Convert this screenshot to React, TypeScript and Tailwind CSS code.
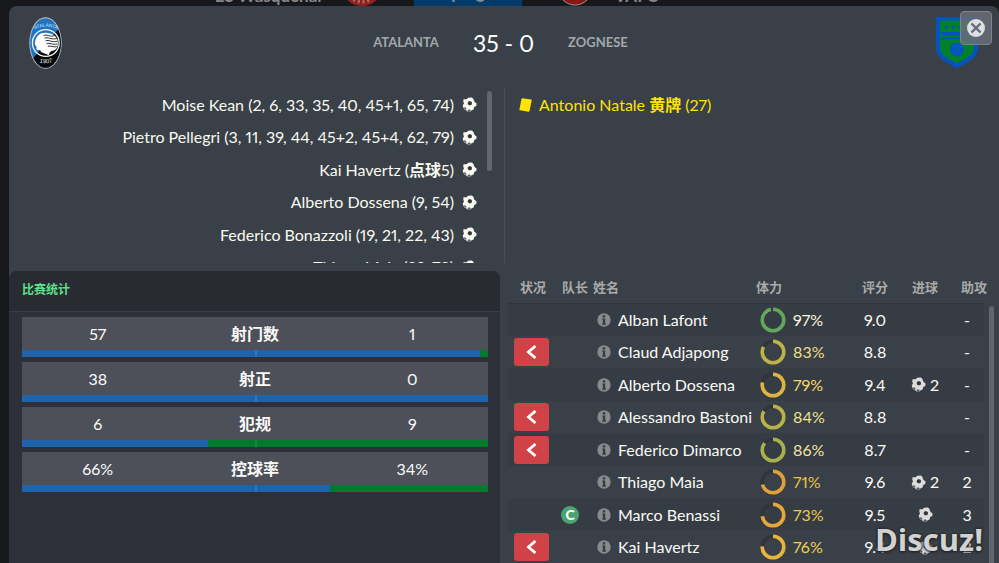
import clsx from "clsx";

const scorers = [
  { name: "Moise Kean", minutes: "2, 6, 33, 35, 40, 45+1, 65, 74" },
  { name: "Pietro Pellegri", minutes: "3, 11, 39, 44, 45+2, 45+4, 62, 79" },
  { name: "Kai Havertz", note: "点球", minutes: "5" },
  { name: "Alberto Dossena", minutes: "9, 54" },
  { name: "Federico Bonazzoli", minutes: "19, 21, 22, 43" },
  { name: "Thiago Maia", minutes: "29, 73" },
];

const stats = [
  { label: "射门数", home: "57", away: "1", share: 98.3 },
  { label: "射正", home: "38", away: "0", share: 100 },
  { label: "犯规", home: "6", away: "9", share: 40 },
  { label: "控球率", home: "66%", away: "34%", share: 66 },
];

type Player = {
  name: string;
  fitness: number;
  ring: string;
  tone: string;
  rating: string;
  goals: number;
  assists: string;
  subbed?: boolean;
  captain?: boolean;
};

const players: Player[] = [
  { name: "Alban Lafont", fitness: 97, ring: "#62a759", tone: "text-[#fbf5df]", rating: "9.0", goals: 0, assists: "-" },
  { name: "Claud Adjapong", fitness: 83, ring: "#beb349", tone: "text-[#eedf86]", rating: "8.8", goals: 0, assists: "-", subbed: true },
  { name: "Alberto Dossena", fitness: 79, ring: "#dcb441", tone: "text-[#f3d769]", rating: "9.4", goals: 2, assists: "-" },
  { name: "Alessandro Bastoni", fitness: 84, ring: "#b7b24b", tone: "text-[#efe290]", rating: "8.8", goals: 0, assists: "-", subbed: true },
  { name: "Federico Dimarco", fitness: 86, ring: "#a9b14e", tone: "text-[#f1e5a0]", rating: "8.7", goals: 0, assists: "-", subbed: true },
  { name: "Thiago Maia", fitness: 71, ring: "#e2a03c", tone: "text-[#edc045]", rating: "9.6", goals: 2, assists: "2" },
  { name: "Marco Benassi", fitness: 73, ring: "#e6a83d", tone: "text-[#efc84a]", rating: "9.5", goals: 1, assists: "3", captain: true },
  { name: "Kai Havertz", fitness: 76, ring: "#e6b43f", tone: "text-[#f2d151]", rating: "9.4", goals: 1, assists: "2", subbed: true },
];

function Ball({ className }: { className?: string }) {
  return (
    <svg viewBox="0 0 15 15" className={clsx("size-[15px] shrink-0", className)} aria-hidden="true">
      <path
        d="M1.500 2.200 4.600 2.300 6.200.7 9.800.4 11.300 1.800 12.400 4.700 14.600 6.600 14.300 9 12.200 10 11.600 12.500 9.600 13.200 8.600 14.600 5.400 14.500 3.800 13 2.600 12.800 1.300 10.600.7 8.600 2 6.400 1.300 4.400Z"
        fill="currentColor"
      />
      <path d="M7.600 4.100 9.900 5 9.900 7.500 7.700 8.600 5.700 7.200 5.900 4.900Z" fill="#30363d" />
      <path d="M1.900 10.300 4.200 10.700 4.300 12.700 2.600 12.600ZM5.600 12.900 7.100 12.300 8.700 13.200 8.200 14.600 5.800 14.600Z" fill="#30363d" opacity=".8" />
    </svg>
  );
}

function AtalantaCrest() {
  return (
    <svg viewBox="0 0 33 52" className="h-[52px] w-[33px]" role="img" aria-label="Atalanta">
      <defs>
        <clipPath id="oval">
          <ellipse cx="16.5" cy="26" rx="15.3" ry="24.8" />
        </clipPath>
        <path id="arc" d="M4.500 13.200 Q16.500 6 29.500 13.200" />
        <path id="foot" d="M8 44.500 Q16.500 48 26 44.500" />
      </defs>
      <ellipse cx="16.5" cy="26" rx="16.2" ry="25.7" fill="#c3c5c7" />
      <g clipPath="url(#oval)">
        <rect width="33" height="52" fill="#1f73c2" />
        <path d="M33 8 0 46v6h33Z" fill="#050607" />
      </g>
      <circle cx="16.8" cy="26" r="13.4" fill="none" stroke="#f5f5f5" strokeWidth="1.3" />
      <path
        d="M6 25.500C7 18 12 15 18.500 16c6.500.7 10.300 4.500 10.500 9.500.2 5-2 8.200-6.500 8.400-1.600 1.400-2.800 2.600-2.400 4.400l-8.400-3.300c.5-2-1-2.200-3-2-1.400.2-1.300-2-1.200-3.600-1-.4-2.300-2.800-1.500-3.900Z"
        fill="#fff"
      />
      <path
        d="M14.500 18.600c4-1.600 5 1.400 10.500.2M15.500 21.200c4-1.600 5 1.600 12.400.4M16.500 23.800c4-1.400 5 1.800 12 .5M17.500 26.600c3.600-1.200 5 1.600 11 .4M19 29.300c3-1 5 1.400 8.800.3"
        fill="none"
        stroke="#14181c"
        strokeWidth=".9"
      />
      <text className="font-['Liberation_Sans']" fontSize="4.700" fill="#dbe6f0" textAnchor="middle">
        <textPath href="#arc" startOffset="50%">
          ATALANTA
        </textPath>
      </text>
      <text className="font-['Liberation_Sans']" fontSize="6" fill="#e8e8e8" textAnchor="middle">
        <textPath href="#foot" startOffset="50%">
          1907
        </textPath>
      </text>
    </svg>
  );
}

function ZogneseCrest() {
  return (
    <svg viewBox="0 0 42 52" className="h-[52px] w-[42px] justify-self-end" role="img" aria-label="Zognese">
      <path d="M0 0H42V30C42 42 31 45 21 51.500C11 45 0 42 0 30Z" fill="#0453c0" />
      <path d="M4 3.500H38V29.500C38 39 29 41.500 21 46.500C13 41.500 4 39 4 29.500Z" fill="#047f2a" />
      <path d="M5 15H37V18.500H5ZM5 20.500H37V22.500H5Z" fill="#0453c0" />
      <path
        d="m10.500 7.500.7 1.700 1.800.1-1.400 1.200.5 1.800-1.600-1-1.600 1 .5-1.800L8 9.300l1.800-.1ZM17.500 7.500l.7 1.700 1.800.1-1.400 1.200.5 1.800-1.600-1-1.600 1 .5-1.800L15 9.300l1.800-.1ZM24.500 7.500l.7 1.700 1.800.1-1.400 1.200.5 1.800-1.600-1-1.600 1 .5-1.800L22 9.300l1.800-.1Z"
        fill="#0453c0"
      />
      <circle cx="21" cy="32.500" r="7" fill="#0453c0" />
      <path d="M18 30l3-2 3 2-1 4h-4ZM21 28v-3M24 30l3-1M23 34l2 3M19 34l-2 3M18 30l-3-1" fill="none" stroke="#05689a" strokeWidth=".8" />
    </svg>
  );
}

function Fitness({ value, color }: { value: number; color: string }) {
  return (
    <svg viewBox="0 0 26 26" className="size-[26px] shrink-0 -rotate-90" aria-hidden="true">
      <circle cx="13" cy="13" r="10.8" fill="none" stroke="#2f353b" strokeWidth="3.6" />
      <circle cx="13" cy="13" r="10.8" fill="none" stroke={color} strokeWidth="3.6" pathLength={100} strokeDasharray={`${value} 100`} />
    </svg>
  );
}

function InfoIcon() {
  return (
    <svg viewBox="0 0 14 14" className="size-3.5" aria-hidden="true">
      <circle cx="7" cy="7" r="6.700" fill="#888b8d" />
      <path d="M5.800 2.300h2.400v2.200H5.800ZM5.300 5.500h2.900v4.900h.7v1.300H5.100v-1.300h.8V6.800h-.6Z" fill="#343b42" />
    </svg>
  );
}

function PreviousResult() {
  return (
    <div className="grid h-1.5 shrink-0 grid-cols-[1fr_108px_1fr] grid-rows-[6px] items-end overflow-hidden pr-16 text-[17px] font-bold text-[#85888a]">
      <div className="flex items-end justify-end gap-[19px]">
        <span className="leading-5">ES Wasquehal</span>
        <svg viewBox="0 0 42 42" className="mr-[31px] size-[42px]" aria-hidden="true">
          <circle cx="21" cy="21" r="21" fill="#8d211c" />
          <circle cx="21" cy="21" r="16" fill="none" stroke="#a66b61" strokeWidth="5" strokeDasharray="2 2.500" />
          <circle cx="21" cy="21" r="12" fill="#8d211c" />
        </svg>
      </div>
      <div className="bg-[#023b69] text-center text-xl leading-6">1 - 0</div>
      <div className="flex items-end gap-[22px]">
        <svg viewBox="0 0 36 36" className="ml-[35px] size-9" aria-hidden="true">
          <circle cx="18" cy="18" r="17" fill="#8d1414" stroke="#95999b" />
        </svg>
        <span className="leading-5">VAFC</span>
      </div>
    </div>
  );
}

function MatchHeader() {
  return (
    <header className="grid h-[82px] grid-cols-[1fr_auto_1fr] items-start pt-[11px] pr-[21px] pl-5">
      <AtalantaCrest />
      <div className="grid grid-cols-[1fr_auto_1fr] items-center gap-[34px] pt-2.5 text-[13px] font-bold text-[#a3a8ab]">
        <span className="text-right">ATALANTA</span>
        <strong className="text-[23px] leading-8 font-normal text-white">35 - 0</strong>
        <span>ZOGNESE</span>
      </div>
      <ZogneseCrest />
    </header>
  );
}

function Events() {
  return (
    <section className="grid h-[175px] grid-cols-[496fr_494fr] text-base text-[#fafaf0]">
      <div className="flex justify-end gap-2.5 overflow-hidden border-r border-[#4a5057] pr-3">
        <ul>
          {scorers.map((scorer) => (
            <li key={scorer.name} className="flex items-center justify-end gap-2 odd:h-[33px] even:h-8">
              <span>
                {scorer.name} ({scorer.note && <b>{scorer.note}</b>}
                {scorer.minutes})
              </span>
              <Ball />
            </li>
          ))}
        </ul>
        <div className="mt-[3px] h-20 w-[5px] rounded-full bg-[#62666e]" />
      </div>
      <div className="flex h-[33px] items-center gap-[7px] pl-3.5 text-[#fee500]">
        <svg viewBox="0 0 13 14" className="h-3.5 w-[13px]" aria-hidden="true">
          <path d="M3.500.3 12 1.500Q12.800 1.700 12.700 2.500L10.500 13Q10.200 13.800 9.400 13.700L1 12.300Q.2 12 .4 11.200L2.500 1Q2.800.2 3.500.3Z" fill="currentColor" />
        </svg>
        <span>
          Antonio Natale <b>黄牌</b> (27)
        </span>
      </div>
    </section>
  );
}

function StatsPanel() {
  return (
    <section className="rounded-t-lg bg-[#2d3038]">
      <h2 className="h-[41px] rounded-t-lg border-b border-[#3b3e46] bg-[#292b33] px-[13px] text-xs leading-[38px] font-bold text-[#5fe08b]">
        比赛统计
      </h2>
      <div className="flex flex-col gap-[5px] pt-[5px] pr-3 pl-[13px]">
        {stats.map((stat) => (
          <div key={stat.label} className="bg-[#4d5058] text-center text-base text-[#fafafa]">
            <div className="grid h-[33px] grid-cols-[1fr_35%_1fr] items-center">
              <span>{stat.home}</span>
              <b>{stat.label}</b>
              <span>{stat.away}</span>
            </div>
            <div className="relative h-[7px] bg-[#047a2d]">
              <div className="h-full bg-[#1f63ad]" style={{ width: `${stat.share}%` }} />
              <div className="absolute inset-y-0 left-1/2 w-0.5 bg-white/10" />
            </div>
          </div>
        ))}
      </div>
    </section>
  );
}

function PlayerRow({ player }: { player: Player }) {
  return (
    <tr className="odd:h-[33px] odd:bg-[#363c43] even:h-8">
      <td className="pl-1.5">
        {player.subbed && (
          <button type="button" aria-label="换下" className="flex h-7 w-[35px] items-center justify-center rounded-[3px] bg-[#d04245]">
            <svg viewBox="0 0 12 14" className="h-3.5 w-3" aria-hidden="true">
              <path d="M9.500 1 2.500 7 9.500 13" fill="none" stroke="white" strokeWidth="2.800" />
            </svg>
          </button>
        )}
      </td>
      <td className="pl-[5px]">
        {player.captain && (
          <span className="flex size-[18px] items-center justify-center rounded-full bg-[#4ca372] text-sm leading-none font-black text-white">C</span>
        )}
      </td>
      <td>
        <div className="flex items-center gap-[7px] pl-1 whitespace-nowrap">
          <InfoIcon />
          {player.name}
        </div>
      </td>
      <td>
        <div className={clsx("flex items-center gap-[7px] pl-1", player.tone)}>
          <Fitness value={player.fitness} color={player.ring} />
          {player.fitness}%
        </div>
      </td>
      <td className="text-center">{player.rating}</td>
      <td>
        {player.goals > 0 && (
          <div className="flex items-center justify-center gap-1">
            <Ball className="text-[#dcdcdc]" />
            {player.goals > 1 && player.goals}
          </div>
        )}
      </td>
      <td className="pr-1.5 text-center">{player.assists}</td>
    </tr>
  );
}

function Ratings() {
  return (
    <section className="flex gap-[5px] overflow-hidden pr-[5px] pl-2">
      <table className="h-fit w-full table-fixed text-base leading-6 text-[#fafaf5]">
        <thead className="text-[13px] text-[#a9aaa9]">
          <tr className="h-8 border-b border-[#2e343a] text-left whitespace-nowrap">
            <th className="w-12 pl-3">状况</th>
            <th className="w-[37px] pl-1.5">队长</th>
            <th>姓名</th>
            <th className="w-[100px]">体力</th>
            <th className="w-[38px] text-center">评分</th>
            <th className="w-[62px] text-center">进球</th>
            <th className="w-7 pl-[5px]">助攻</th>
          </tr>
        </thead>
        <tbody>
          {players.map((player) => (
            <PlayerRow key={player.name} player={player} />
          ))}
        </tbody>
      </table>
      <div className="mt-[35px] w-[5px] shrink-0 rounded-t-full bg-[#62666e]" />
    </section>
  );
}

export default function App() {
  return (
    <main className="relative flex h-screen flex-col overflow-hidden bg-[#16181b] font-[Lato,'Noto_Sans_CJK_SC',sans-serif] proportional-nums">
      <PreviousResult />
      <div className="relative ml-[9px] flex grow flex-col rounded-t-lg bg-[#394047]">
        <MatchHeader />
        <Events />
        <div className="mt-2 grid grow grid-cols-[491fr_499fr]">
          <StatsPanel />
          <Ratings />
        </div>
        <button
          type="button"
          aria-label="关闭"
          className="absolute top-[5px] right-[7px] flex h-[34px] w-8 items-center justify-center rounded border border-[#7d828c] bg-[#686d78]/85"
        >
          <svg viewBox="0 0 18 18" className="size-[18px]" aria-hidden="true">
            <circle cx="9" cy="9" r="9" fill="#dedfe0" />
            <path d="M4.500 4.500 13.500 13.500M13.500 4.500 4.500 13.500" stroke="#626c79" strokeWidth="2.400" />
          </svg>
        </button>
      </div>
      <div className="absolute right-4 bottom-1 font-['Open_Sans'] text-[31px] leading-10 font-bold text-[#d2d2d2] [text-shadow:0_0_2px_#222,0_0_2px_#222,0_1px_3px_#222]">
        Discuz!
      </div>
    </main>
  );
}
